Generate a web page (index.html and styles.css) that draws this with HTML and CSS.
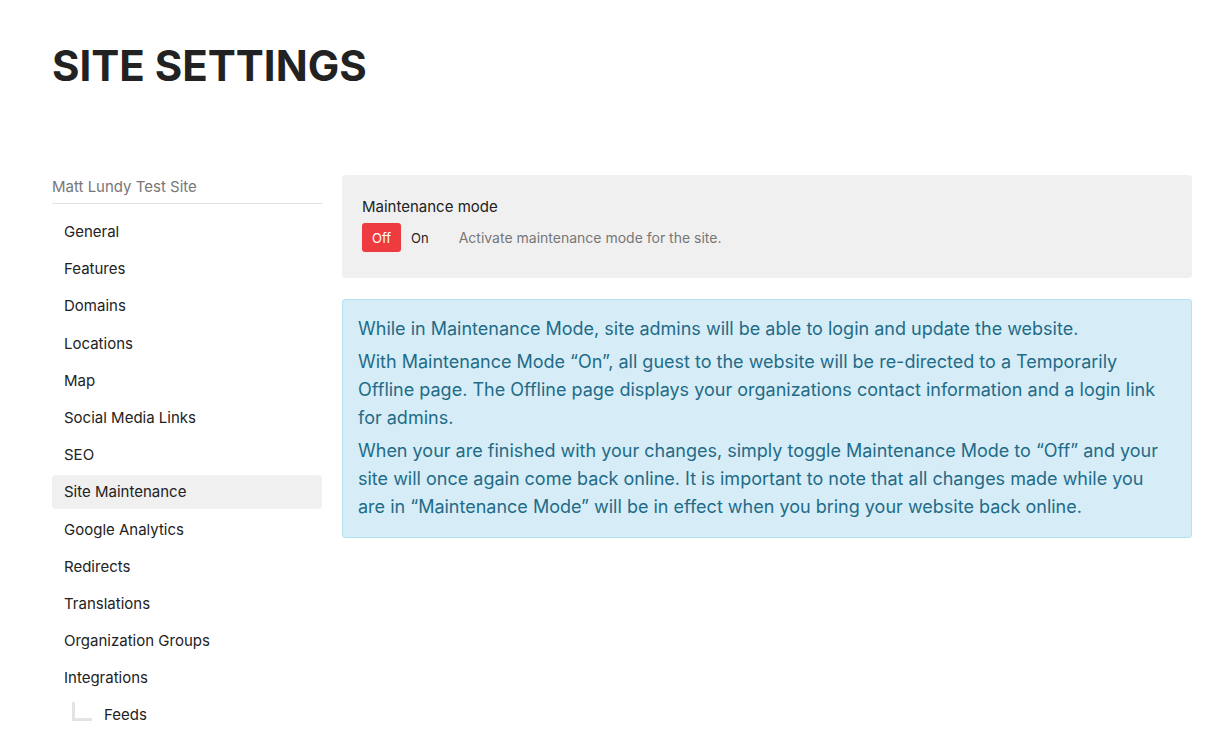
FILE: index.html
```html
<!DOCTYPE html>
<html lang="en">
<head>
    <meta charset="UTF-8">
    <meta name="viewport" content="width=device-width, initial-scale=1.0">
    <title>Site Settings</title>
    <link rel="stylesheet" href="styles.css">
</head>
<body>
    <h1 class="page-title">SITE SETTINGS</h1>

    <div class="layout">
        <nav class="sidebar">
            <div class="site-name">Matt Lundy Test Site</div>
            <ul class="nav-list">
                <li><a href="#">General</a></li>
                <li><a href="#">Features</a></li>
                <li><a href="#">Domains</a></li>
                <li><a href="#">Locations</a></li>
                <li><a href="#">Map</a></li>
                <li><a href="#">Social Media Links</a></li>
                <li><a href="#">SEO</a></li>
                <li><a href="#" class="active">Site Maintenance</a></li>
                <li><a href="#">Google Analytics</a></li>
                <li><a href="#">Redirects</a></li>
                <li><a href="#">Translations</a></li>
                <li><a href="#">Organization Groups</a></li>
                <li><a href="#">Integrations</a></li>
                <li class="sub"><a href="#">Feeds</a></li>
            </ul>
        </nav>

        <main class="content">
            <div class="setting-card">
                <div class="setting-label">Maintenance mode</div>
                <div class="setting-row">
                    <div class="toggle">
                        <button type="button" class="toggle-btn selected">Off</button>
                        <button type="button" class="toggle-btn">On</button>
                    </div>
                    <span class="setting-help">Activate maintenance mode for the site.</span>
                </div>
            </div>

            <div class="alert-info">
                <p>While in Maintenance Mode, site admins will be able to login and update the website.</p>
                <p>With Maintenance Mode “On”, all guest to the website will be re-directed to a Temporarily Offline page. The Offline page displays your organizations contact information and a login link for admins.</p>
                <p>When your are finished with your changes, simply toggle Maintenance Mode to “Off” and your site will once again come back online. It is important to note that all changes made while you are in “Maintenance Mode” will be in effect when you bring your website back online.</p>
            </div>
        </main>
    </div>
</body>
</html>
```

FILE: styles.css
```css
body {
    margin: 0;
    padding: 0 32px 0 52px;
    font-family: Inter, "Noto Sans", sans-serif;
    color: #222;
    background: #fff;
}

.page-title {
    margin: 0;
    padding-top: 40px;
    font-size: 42px;
    line-height: 52px;
    font-weight: 700;
    color: #222;
}

.layout {
    display: flex;
    gap: 20px;
    margin-top: 83px;
    align-items: flex-start;
}

.sidebar {
    width: 270px;
    flex-shrink: 0;
}

.site-name {
    font-size: 15px;
    color: #777;
    padding-top: 2px;
    padding-bottom: 6px;
    border-bottom: 1px solid #e3e3e3;
    line-height: 20px;
}

.nav-list {
    list-style: none;
    margin: 11px 0 0;
    padding: 0;
}

.nav-list li {
    margin-bottom: 3.2px;
}

.nav-list a {
    display: block;
    padding: 0 12px;
    height: 34px;
    line-height: 34px;
    font-size: 15px;
    color: #222;
    text-decoration: none;
    border-radius: 4px;
}

.nav-list a.active {
    background-color: #f0f0f0;
}

.nav-list .sub {
    position: relative;
}

.nav-list .sub a {
    padding-left: 52px;
}

.nav-list .sub::before {
    content: "";
    position: absolute;
    left: 20px;
    top: 4px;
    width: 17px;
    height: 16px;
    border-left: 3px solid #e3e3e3;
    border-bottom: 3px solid #e3e3e3;
}

.content {
    flex: 1;
}

.setting-card {
    background-color: #f0f0f0;
    border-radius: 4px;
    padding: 22px 20px 26px;
}

.setting-label {
    font-size: 15px;
    line-height: 20px;
    margin-bottom: 6px;
}

.setting-row {
    display: flex;
    align-items: center;
}

.toggle {
    display: flex;
    align-items: center;
    margin-right: 20px;
}

.toggle-btn {
    font-family: inherit;
    font-size: 13px;
    height: 29px;
    padding: 0 10px;
    border: none;
    border-radius: 3px;
    background: transparent;
    color: #222;
    cursor: pointer;
}

.toggle-btn.selected {
    background-color: #ee3b40;
    color: #fff;
}

.setting-help {
    font-size: 14px;
    color: #777;
}

.alert-info {
    margin-top: 21px;
    background-color: #d6edf7;
    border: 1px solid #b2e3f0;
    border-radius: 3px;
    padding: 15px 30px 16px 15px;
    color: #1f6b88;
    font-size: 18px;
    line-height: 28px;
}

.alert-info p {
    margin: 0 0 5px;
}

.alert-info p:last-child {
    margin-bottom: 0;
}
```
